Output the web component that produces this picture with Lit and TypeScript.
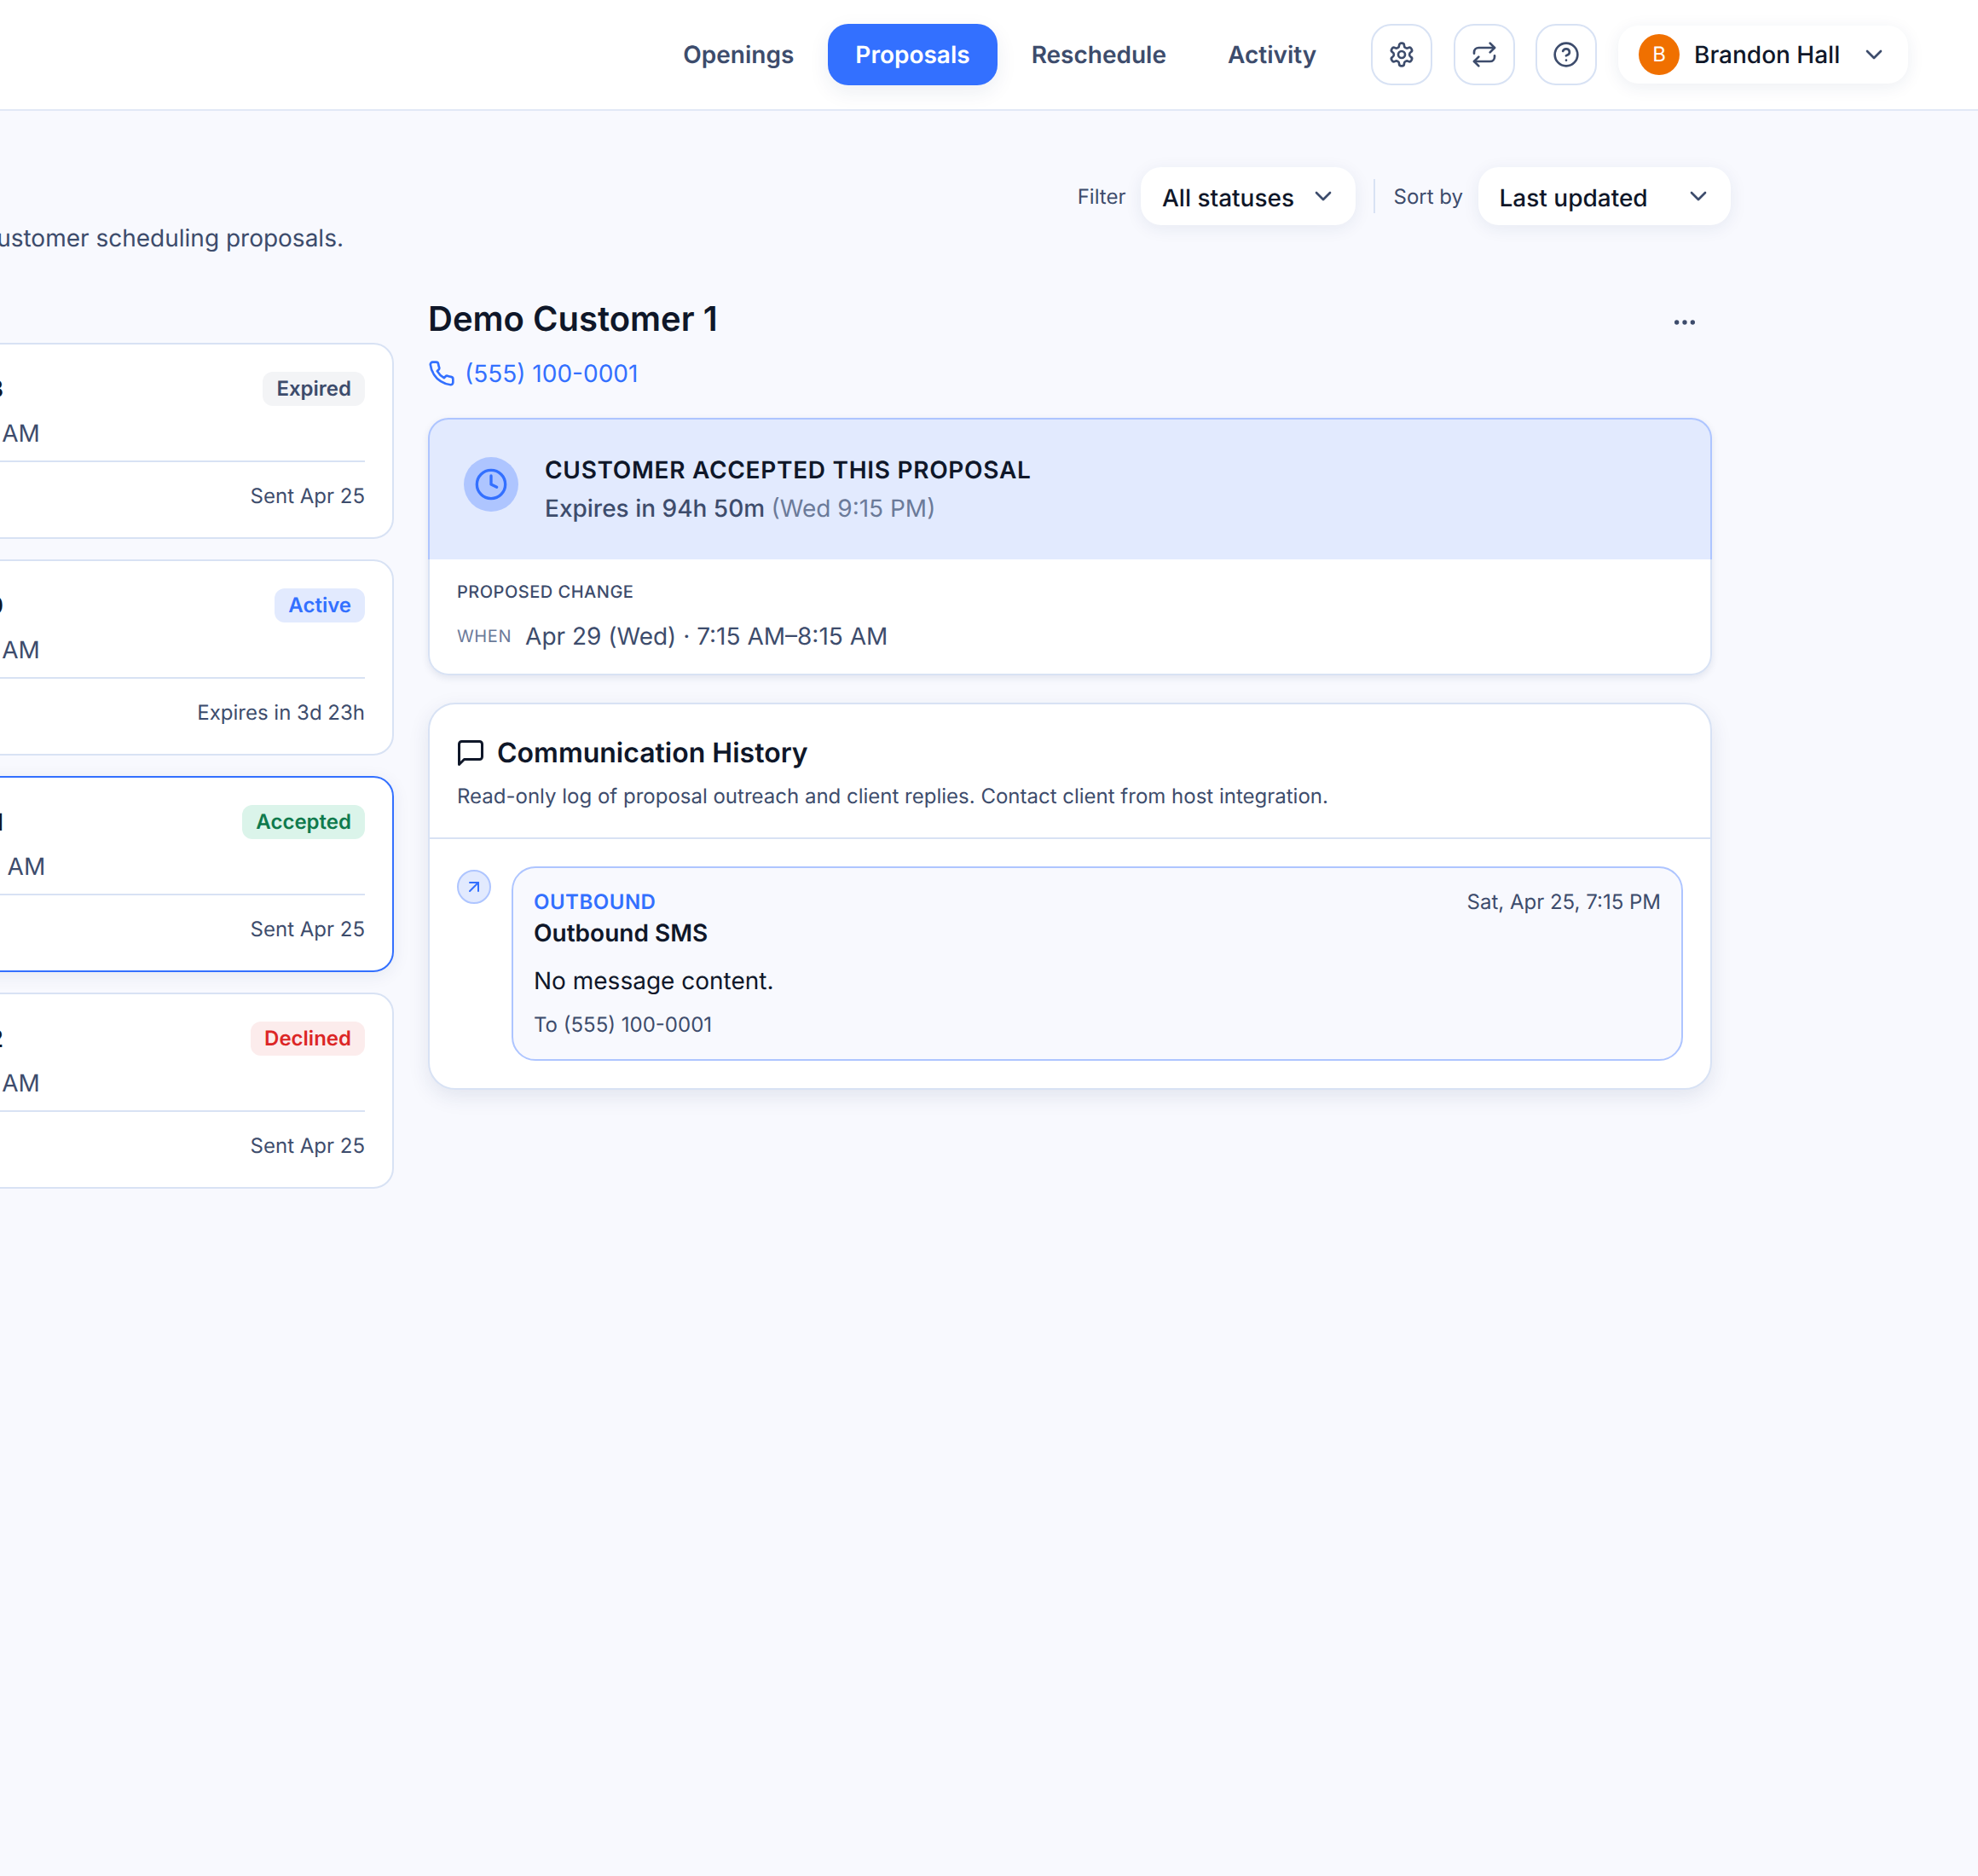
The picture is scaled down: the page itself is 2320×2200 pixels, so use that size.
import { LitElement, css, html, svg } from 'lit';
import { customElement } from 'lit/decorators.js';

const icon = (size: number, body: unknown) => html`<svg
  width=${size}
  height=${size}
  viewBox="0 0 24 24"
  fill="none"
  stroke="currentColor"
  stroke-width="2"
  stroke-linecap="round"
  stroke-linejoin="round"
>${body}</svg>`;

const gear = svg`<path d="M12.22 2h-.44a2 2 0 0 0-2 2v.18a2 2 0 0 1-1 1.73l-.43.25a2 2 0 0 1-2 0l-.15-.08a2 2 0 0 0-2.73.73l-.22.38a2 2 0 0 0 .73 2.73l.15.1a2 2 0 0 1 1 1.72v.51a2 2 0 0 1-1 1.74l-.15.09a2 2 0 0 0-.73 2.73l.22.38a2 2 0 0 0 2.73.73l.15-.08a2 2 0 0 1 2 0l.43.25a2 2 0 0 1 1 1.73V20a2 2 0 0 0 2 2h.44a2 2 0 0 0 2-2v-.18a2 2 0 0 1 1-1.73l.43-.25a2 2 0 0 1 2 0l.15.08a2 2 0 0 0 2.73-.73l.22-.39a2 2 0 0 0-.73-2.73l-.15-.08a2 2 0 0 1-1-1.74v-.5a2 2 0 0 1 1-1.74l.15-.09a2 2 0 0 0 .73-2.73l-.22-.38a2 2 0 0 0-2.73-.73l-.15.08a2 2 0 0 1-2 0l-.43-.25a2 2 0 0 1-1-1.73V4a2 2 0 0 0-2-2z"/><circle cx="12" cy="12" r="3"/>`;
const repeat = svg`<path d="m17 2 4 4-4 4"/><path d="M3 11v-1a4 4 0 0 1 4-4h14"/><path d="m7 22-4-4 4-4"/><path d="M21 13v1a4 4 0 0 1-4 4H3"/>`;
const help = svg`<circle cx="12" cy="12" r="10"/><path d="M9.09 9a3 3 0 0 1 5.83 1c0 2-3 3-3 3"/><path d="M12 17h.01"/>`;
const chevron = svg`<path d="m6 9 6 6 6-6"/>`;
const phone = svg`<path d="M22 16.92v3a2 2 0 0 1-2.18 2 19.79 19.79 0 0 1-8.63-3.07 19.5 19.5 0 0 1-6-6 19.79 19.79 0 0 1-3.07-8.67A2 2 0 0 1 4.11 2h3a2 2 0 0 1 2 1.72 12.84 12.84 0 0 0 .7 2.81 2 2 0 0 1-.45 2.11L8.09 9.91a16 16 0 0 0 6 6l1.27-1.27a2 2 0 0 1 2.11-.45 12.84 12.84 0 0 0 2.81.7A2 2 0 0 1 22 16.92z"/>`;
const clock = svg`<circle cx="12" cy="12" r="10"/><polyline points="12 6 12 12 16 14"/>`;
const message = svg`<path d="M21 15a2 2 0 0 1-2 2H7l-4 4V5a2 2 0 0 1 2-2h14a2 2 0 0 1 2 2z"/>`;
const arrow = svg`<path d="M7 7h10v10"/><path d="M7 17 17 7"/>`;
const dots = svg`<circle cx="5" cy="12" r="1"/><circle cx="12" cy="12" r="1"/><circle cx="19" cy="12" r="1"/>`;

const proposals = [
  { name: 'Demo Customer 3', when: 'Apr 10 (Mon) · 7:15 AM–8:15 AM', status: 'Expired', foot: 'Sent Apr 25' },
  { name: 'Demo Customer 0', when: 'Apr 10 (Mon) · 7:15 AM–8:15 AM', status: 'Active', foot: 'Expires in 3d 23h' },
  { name: 'Demo Customer 1', when: 'Apr 29 (Wed) · 7:15 AM–8:15 AM', status: 'Accepted', foot: 'Sent Apr 25', selected: true },
  { name: 'Demo Customer 2', when: 'Apr 10 (Mon) · 7:15 AM–8:15 AM', status: 'Declined', foot: 'Sent Apr 25' },
];

@customElement('app-root')
export class AppRoot extends LitElement {
  static styles = css`
    :host {
      display: block;
      min-height: 2200px;
      overflow: hidden;
      background: #f8f9fe;
      color: #0f1729;
      font-family: Inter, 'Noto Sans', sans-serif;
      text-rendering: geometricPrecision;
    }
    svg {
      display: block;
      flex: none;
    }

    .topbar {
      display: flex;
      justify-content: flex-end;
      align-items: center;
      height: 130px;
      box-sizing: border-box;
      padding-right: 82px;
      background: #fff;
      border-bottom: 2px solid #e2e8f6;
    }
    .tabs {
      display: flex;
      gap: 8px;
      margin-right: 32px;
    }
    .tab {
      padding: 0 32px;
      height: 72px;
      line-height: 72px;
      border-radius: 24px;
      font-size: 28px;
      font-weight: 600;
      color: #3d4c6c;
    }
    .tab.on {
      background: #3370ff;
      color: #fff;
      box-shadow: 0 8px 24px rgba(30, 50, 100, 0.08);
    }
    .iconbtn {
      display: flex;
      align-items: center;
      justify-content: center;
      width: 72px;
      height: 72px;
      box-sizing: border-box;
      margin-right: 24.6px;
      border: 2px solid #d8e2f4;
      border-radius: 24px;
      color: #3d4c6c;
    }
    .user {
      display: flex;
      align-items: center;
      width: 340px;
      height: 68px;
      box-sizing: border-box;
      padding: 0 24px;
      background: #fff;
      border-radius: 24px;
      box-shadow: 0 4px 20px rgba(30, 50, 100, 0.08);
      font-size: 28px;
      font-weight: 500;
    }
    .avatar {
      width: 48px;
      height: 48px;
      margin-right: 17px;
      border-radius: 50%;
      background: #f07000;
      color: #fff;
      font-size: 24px;
      font-weight: 400;
      line-height: 48px;
      text-align: center;
    }
    .user .chev {
      margin-left: auto;
      color: #3d4c6c;
    }

    main {
      width: 2436px;
      margin-left: -406px;
      padding-top: 66px;
    }
    .head {
      display: flex;
      justify-content: space-between;
      align-items: flex-start;
      height: 152px;
    }
    .intro {
      width: 809px;
      text-align: right;
      white-space: nowrap;
    }
    .intro h1 {
      margin: 0;
      height: 63px;
      font-size: 40px;
      line-height: 48px;
      font-weight: 600;
      text-align: left;
    }
    .intro p {
      margin: 0;
      font-size: 28px;
      line-height: 40px;
      color: #3d4c6c;
    }
    .tools {
      display: flex;
      align-items: center;
    }
    .tools label {
      font-size: 24px;
      color: #3d4c6c;
    }
    .select {
      display: flex;
      align-items: center;
      justify-content: space-between;
      height: 68px;
      box-sizing: border-box;
      padding: 0 22px 0 24.5px;
      margin-left: 18px;
      background: #fff;
      border-radius: 24px;
      box-shadow: 0 4px 20px rgba(30, 50, 100, 0.08);
      font-size: 28px;
      font-weight: 500;
      color: #3d4c6c;
    }
    .select span {
      margin-top: 3px;
      color: #0f1729;
    }
    .select.status {
      width: 252px;
    }
    .select.sort {
      width: 296px;
    }
    .vline {
      width: 2px;
      height: 40px;
      margin: 0 21px;
      background: #d8e2f4;
    }

    .cols {
      display: grid;
      grid-template-columns: 868px 1506px;
      column-gap: 40px;
    }
    .list {
      display: flex;
      flex-direction: column;
      gap: 24px;
      padding-top: 54px;
    }
    .card {
      height: 230px;
      box-sizing: border-box;
      padding: 32px;
      background: #fff;
      border: 2px solid #d8e2f4;
      border-radius: 24px;
    }
    .card.on {
      border-color: #3370ff;
      box-shadow: 0 4px 20px rgba(30, 50, 100, 0.08);
    }
    .card .row {
      display: flex;
      justify-content: space-between;
      align-items: center;
      height: 40px;
    }
    .card .name {
      width: 376px;
      font-size: 28px;
      font-weight: 600;
      text-align: right;
      white-space: nowrap;
    }
    .badge {
      padding: 0 16px;
      height: 40px;
      line-height: 40px;
      border-radius: 12px;
      font-size: 24px;
      font-weight: 600;
    }
    .badge.expired {
      background: #f3f4f6;
      color: #3d4c6c;
    }
    .badge.active {
      background: #e2eafe;
      color: #3370ff;
    }
    .badge.accepted {
      background: #dbf4ea;
      color: #0f7a4d;
    }
    .badge.declined {
      background: #fcecec;
      color: #dc2626;
    }
    .card .when {
      margin-top: 11px;
      font-size: 28px;
      line-height: 42px;
      color: #3d4c6c;
      white-space: nowrap;
    }
    .card .foot {
      margin-top: 11px;
      padding-top: 22px;
      border-top: 2px solid #d8e2f4;
      font-size: 24px;
      line-height: 36px;
      color: #3d4c6c;
      text-align: right;
    }

    .detail {
      display: flex;
      flex-direction: column;
    }
    .dhead {
      display: flex;
      justify-content: space-between;
      align-items: flex-start;
      margin-bottom: 12px;
    }
    .dhead h2 {
      margin: 0;
      padding-top: 2px;
      font-size: 40px;
      line-height: 48px;
      font-weight: 600;
    }
    .more {
      padding: 14px 16px;
      color: #3d4c6c;
    }
    .phone {
      display: flex;
      align-items: center;
      gap: 11px;
      height: 36px;
      margin-bottom: 34px;
      font-size: 28px;
      color: #3370ff;
    }

    .panel {
      border-radius: 24px;
      box-shadow: 0 3px 8px rgba(30, 50, 100, 0.1);
      margin-bottom: 32px;
    }
    .banner {
      display: flex;
      gap: 31px;
      height: 166px;
      box-sizing: border-box;
      padding: 44px 40px 0;
      background: #e2eafe;
      border: 2px solid #aec5ff;
      border-bottom: 0;
      border-radius: 24px 24px 0 0;
    }
    .bubble-icon {
      display: flex;
      align-items: center;
      justify-content: center;
      width: 64px;
      height: 64px;
      border-radius: 50%;
      background: #aec5ff;
      color: #3370ff;
    }
    .btext {
      margin-top: -5px;
    }
    .btext .t {
      font-size: 28px;
      line-height: 40px;
      font-weight: 600;
      letter-spacing: 0.7px;
    }
    .btext .s {
      margin-top: 5px;
      font-size: 28px;
      line-height: 40px;
      font-weight: 500;
      color: #3d4c6c;
    }
    .btext .s span {
      font-weight: 400;
      color: #6b7a99;
    }
    .change {
      height: 136px;
      box-sizing: border-box;
      padding: 22px 32px 0;
      background: #fff;
      border: 2px solid #d8e2f4;
      border-top: 0;
      border-radius: 0 0 24px 24px;
    }
    .change .label {
      font-size: 20px;
      line-height: 32px;
      font-weight: 500;
      letter-spacing: 0.5px;
      color: #3d4c6c;
    }
    .change .line {
      display: flex;
      align-items: center;
      gap: 16px;
      margin-top: 14px;
      font-size: 28px;
      line-height: 44px;
      color: #3d4c6c;
    }
    .change .line b {
      font-size: 20px;
      font-weight: 400;
      letter-spacing: 0.6px;
      color: #6b7a99;
    }

    .history {
      background: #fff;
      border: 2px solid #d8e2f4;
      border-radius: 32px;
      box-shadow: 0 8px 24px rgba(30, 50, 100, 0.1);
      height: 454px;
      box-sizing: border-box;
    }
    .hhead {
      height: 158px;
      box-sizing: border-box;
      padding: 33px 32px 0;
      border-bottom: 2px solid #d8e2f4;
    }
    .htitle {
      display: flex;
      align-items: center;
      gap: 13px;
      font-size: 32px;
      line-height: 48px;
      font-weight: 600;
    }
    .htitle svg {
      margin-left: -2px;
    }
    .hhead p {
      margin: 9px 0 0;
      font-size: 24px;
      line-height: 36px;
      color: #3d4c6c;
    }
    .entry {
      display: flex;
      gap: 24px;
      padding: 32px 32px 0;
    }
    .dir {
      display: flex;
      align-items: center;
      justify-content: center;
      width: 40px;
      height: 40px;
      box-sizing: border-box;
      margin-top: 4px;
      border: 2px solid #aec5ff;
      border-radius: 50%;
      background: #e2eafe;
      color: #3370ff;
      flex: none;
    }
    .msg {
      flex: 1;
      height: 228px;
      box-sizing: border-box;
      padding: 24px 24px 0;
      background: #f8f9fe;
      border: 2px solid #aec5ff;
      border-radius: 28px;
    }
    .msg .top {
      display: flex;
      justify-content: space-between;
      font-size: 24px;
      line-height: 32px;
      color: #3d4c6c;
    }
    .msg .top b {
      font-weight: 600;
      letter-spacing: 0.5px;
      color: #3370ff;
    }
    .msg .subj {
      margin-top: 2px;
      font-size: 28px;
      line-height: 36px;
      font-weight: 600;
    }
    .msg .body {
      margin-top: 17px;
      font-size: 28px;
      line-height: 42px;
    }
    .msg .to {
      margin-top: 13px;
      font-size: 24px;
      line-height: 36px;
      color: #3d4c6c;
    }
  `;

  render() {
    return html`
      <div class="topbar">
        <div class="tabs">
          <div class="tab">Openings</div>
          <div class="tab on">Proposals</div>
          <div class="tab">Reschedule</div>
          <div class="tab">Activity</div>
        </div>
        <div class="iconbtn">${icon(32, gear)}</div>
        <div class="iconbtn">${icon(32, repeat)}</div>
        <div class="iconbtn">${icon(32, help)}</div>
        <div class="user">
          <div class="avatar">B</div>
          Brandon Hall
          <div class="chev">${icon(32, chevron)}</div>
        </div>
      </div>

      <main>
        <div class="head">
          <div class="intro">
            <h1>Proposals</h1>
            <p>Review and manage customer scheduling proposals.</p>
          </div>
          <div class="tools">
            <label>Filter</label>
            <div class="select status"><span>All statuses</span>${icon(32, chevron)}</div>
            <div class="vline"></div>
            <label>Sort by</label>
            <div class="select sort"><span>Last updated</span>${icon(32, chevron)}</div>
          </div>
        </div>

        <div class="cols">
          <div class="list">
            ${proposals.map(
              (p) => html`
                <div class="card ${p.selected ? 'on' : ''}">
                  <div class="row">
                    <div class="name">${p.name}</div>
                    <div class="badge ${p.status.toLowerCase()}">${p.status}</div>
                  </div>
                  <div class="when">${p.when}</div>
                  <div class="foot">${p.foot}</div>
                </div>
              `
            )}
          </div>

          <div class="detail">
            <div class="dhead">
              <h2>Demo Customer 1</h2>
              <div class="more">${icon(32, dots)}</div>
            </div>
            <div class="phone">${icon(32, phone)}(555) 100-0001</div>

            <div class="panel">
              <div class="banner">
                <div class="bubble-icon">${icon(40, clock)}</div>
                <div class="btext">
                  <div class="t">CUSTOMER ACCEPTED THIS PROPOSAL</div>
                  <div class="s">Expires in 94h 50m <span>(Wed 9:15 PM)</span></div>
                </div>
              </div>
              <div class="change">
                <div class="label">PROPOSED CHANGE</div>
                <div class="line"><b>WHEN</b>Apr 29 (Wed) · 7:15 AM–8:15 AM</div>
              </div>
            </div>

            <div class="history">
              <div class="hhead">
                <div class="htitle">${icon(36, message)}Communication History</div>
                <p>Read-only log of proposal outreach and client replies. Contact client from host integration.</p>
              </div>
              <div class="entry">
                <div class="dir">${icon(24, arrow)}</div>
                <div class="msg">
                  <div class="top"><b>OUTBOUND</b><span>Sat, Apr 25, 7:15 PM</span></div>
                  <div class="subj">Outbound SMS</div>
                  <div class="body">No message content.</div>
                  <div class="to">To (555) 100-0001</div>
                </div>
              </div>
            </div>
          </div>
        </div>
      </main>
    `;
  }
}
